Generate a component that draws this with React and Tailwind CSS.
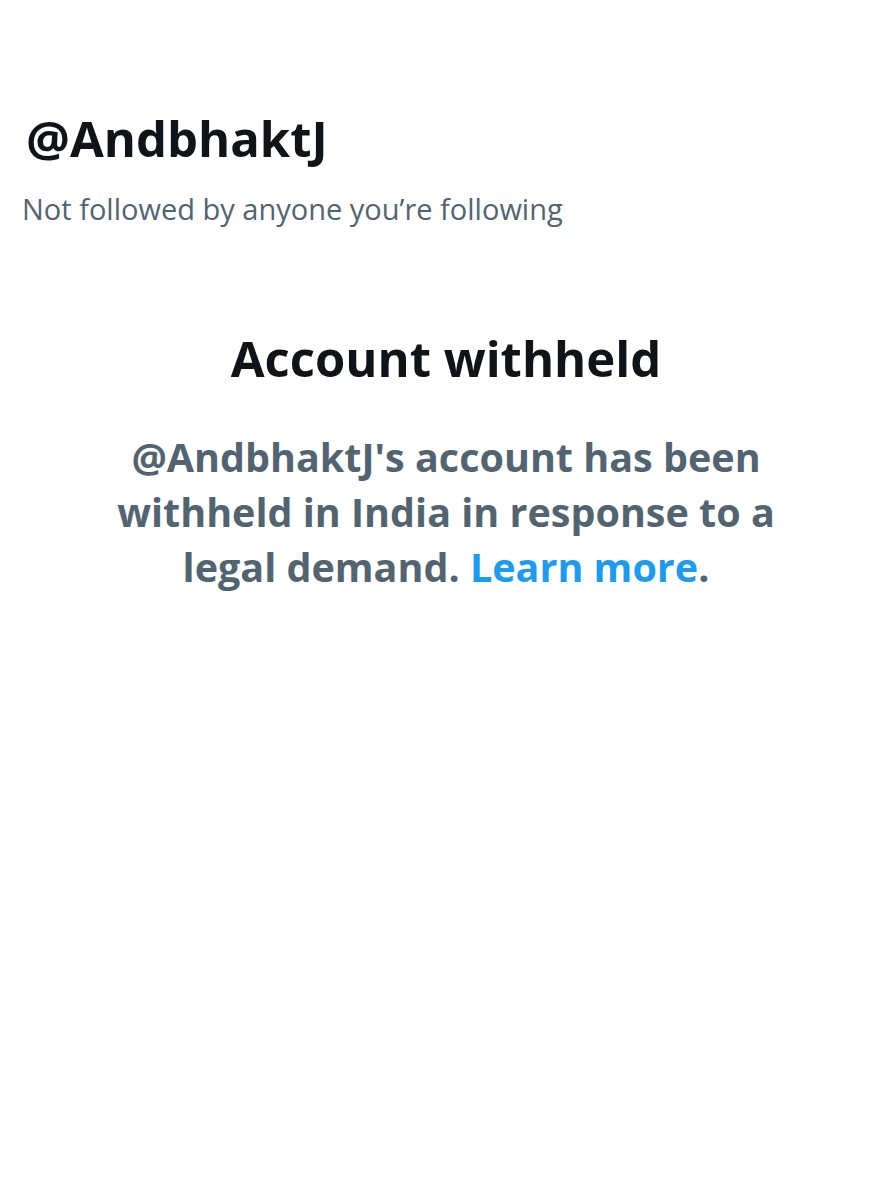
export default function App() {
  return (
    <div className="w-[892px] h-[1200px] bg-white" style={{ fontFamily: '"Open Sans", "Liberation Sans", Arial, sans-serif' }}>
      <div className="pt-[110px] pl-[26px]">
        <h1 className="text-[49px] leading-[56px] font-bold text-[#0f1419]">@AndbhaktJ</h1>
        <p className="mt-[25px] -ml-[4px] text-[29px] leading-[36px] text-[#536471]">Not followed by anyone you’re following</p>
      </div>
      <div className="mt-[103px] flex flex-col items-center">
        <h2 className="text-[49px] leading-[56px] font-bold text-[#0f1419]">Account withheld</h2>
        <p className="mt-[44px] w-[720px] text-center text-[39.5px] leading-[55px] font-bold text-[#536471]">
          @AndbhaktJ's account has been withheld in India in response to a legal demand.{' '}
          <span className="text-[#1d9bf0]">Learn more</span>.
        </p>
      </div>
    </div>
  );
}
